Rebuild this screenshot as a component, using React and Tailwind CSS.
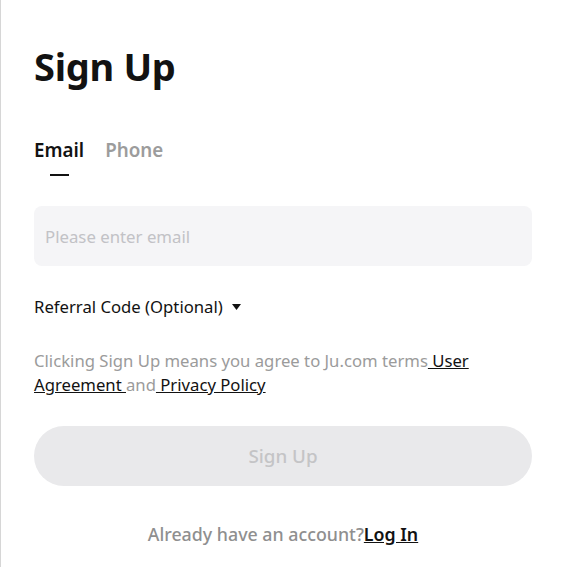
import React, { useState } from 'react';

const App = () => {
  const [tab, setTab] = useState('email');

  return (
    <div
      className="min-h-screen w-[572px] bg-white border-l border-[#d6d6d6] pl-[33px] pr-[40px] pt-[40px] text-[#121212]"
      style={{ fontFamily: '"Noto Sans", "Open Sans", sans-serif' }}
    >
      <h1 className="text-[38px] font-bold leading-[52px] tracking-[-0.3px]">Sign Up</h1>

      {/* tabs */}
      <div className="mt-[46px] flex gap-[21px]">
        <button
          onClick={() => setTab('email')}
          className={`flex flex-col items-center text-[18.8px] font-semibold leading-[24px] ${tab === 'email' ? 'text-[#121212]' : 'text-[#9c9c9c]'}`}
        >
          Email
          <span className={`mt-[12px] h-[2px] w-[19px] ${tab === 'email' ? 'bg-[#121212]' : 'bg-transparent'}`} />
        </button>
        <button
          onClick={() => setTab('phone')}
          className={`flex flex-col items-center text-[18.8px] font-semibold leading-[24px] ${tab === 'phone' ? 'text-[#121212]' : 'text-[#9c9c9c]'}`}
        >
          Phone
          <span className={`mt-[12px] h-[2px] w-[19px] ${tab === 'phone' ? 'bg-[#121212]' : 'bg-transparent'}`} />
        </button>
      </div>

      <input
        placeholder={tab === 'email' ? 'Please enter email' : 'Please enter phone number'}
        className="mt-[30px] block h-[60px] w-full rounded-[8px] bg-[#f5f5f7] px-[11px] text-[16.8px] outline-none placeholder:text-[#c2c2c6]"
      />

      <button className="mt-[29px] flex items-center gap-[9px] text-[16.7px] leading-[24px] text-[#121212]">
        Referral Code (Optional)
        <svg width="9" height="6" viewBox="0 0 9 6">
          <path d="M0 0h9L4.5 6z" fill="#121212" />
        </svg>
      </button>

      <p className="mt-[30px] text-[16.7px] leading-[24px] text-[#9b9b9b]">
        Clicking Sign Up means you agree to Ju.com terms<a href="#" className="text-[#121212] underline"> User Agreement </a>and<a href="#" className="text-[#121212] underline"> Privacy Policy</a>
      </p>

      <button
        disabled
        className="mt-[29px] block h-[60px] w-full rounded-full bg-[#e9e9eb] text-[18.8px] font-medium text-[#c4c4c6]"
      >
        Sign Up
      </button>

      <p className="mt-[36px] text-center text-[17.8px] font-medium leading-[24px] text-[#8f8f8f]">
        Already have an account?<a href="#" className="font-semibold text-[#121212] underline">Log In</a>
      </p>
    </div>
  );
};

export default App;
